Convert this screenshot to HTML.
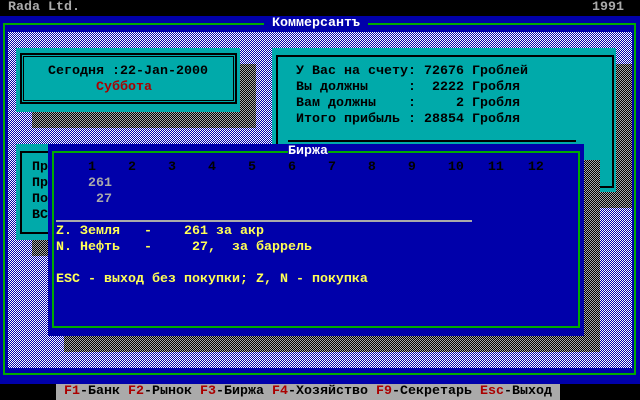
<!DOCTYPE html><html><head><meta charset="utf-8"><style>
*{margin:0;padding:0}
body{width:640px;height:400px;background:#000;position:relative;overflow:hidden;font-family:"Liberation Mono","DejaVu Sans Mono",monospace;font-size:13.33px;font-weight:bold;line-height:16px}
div{position:absolute}
.t{white-space:pre}
.chk{background:repeating-conic-gradient(#0000aa 0 25%,#ffffff 0 50%) 0 0/2px 2px}
.sh{background:repeating-conic-gradient(#000 0 25%,#aaaaaa 0 50%) 0 0/2px 2px}
.cy{background:#00aaaa}
.g{background:#00aa00}
</style></head><body>
<div class="t" style="left:8px;top:0;color:#aaa">Rada Ltd.</div>
<div class="t" style="left:592px;top:0;color:#aaa">1991</div>
<div style="left:0;top:16px;width:640px;height:368px;background:#0000aa"></div>
<div class="g" style="left:3px;top:23px;width:261px;height:2px"></div>
<div class="g" style="left:368px;top:23px;width:268px;height:2px"></div>
<div class="g" style="left:3px;top:23px;width:2px;height:352px"></div>
<div class="g" style="left:634px;top:23px;width:2px;height:352px"></div>
<div class="g" style="left:3px;top:373px;width:633px;height:2px"></div>
<div class="t" style="left:272px;top:16px;color:#fff">Коммерсантъ</div>
<div class="chk" style="left:8px;top:32px;width:624px;height:336px"></div>
<div class="sh" style="left:32px;top:64px;width:224px;height:64px"></div>
<div class="cy" style="left:16px;top:48px;width:224px;height:64px"></div>
<div style="left:20px;top:53px;width:213px;height:47px;border:2px solid #000"></div>
<div style="left:23px;top:56px;width:209px;height:43px;border:1px solid #000"></div>
<div class="t" style="left:48px;top:64px;color:#000">Сегодня :22-Jan-2000</div>
<div class="t" style="left:96px;top:80px;color:#aa0000">Суббота</div>
<div class="sh" style="left:288px;top:64px;width:344px;height:144px"></div>
<div class="cy" style="left:272px;top:48px;width:344px;height:144px"></div>
<div style="left:276px;top:55px;width:334px;height:129px;border:2px solid #000"></div>
<div class="t" style="left:296px;top:64px;color:#000">У Вас на счету: 72676 Гроблей
Вы должны     :  2222 Гробля
Вам должны    :     2 Гробля
Итого прибыль : 28854 Гробля</div>
<div style="left:288px;top:140px;width:288px;height:2px;background:#000"></div>
<div style="left:584px;top:160px;width:16px;height:32px;background:#000"></div>
<div style="left:584px;top:182px;width:16px;height:2px;background:#aaa"></div>
<div class="sh" style="left:32px;top:160px;width:40px;height:96px"></div>
<div class="cy" style="left:16px;top:144px;width:40px;height:96px"></div>
<div style="left:20px;top:151px;width:40px;height:79px;border:2px solid #000"></div>
<div class="t" style="left:32px;top:160px;color:#000">Пр
Пр
По
ВС</div>
<div class="sh" style="left:64px;top:160px;width:536px;height:192px"></div>
<div style="left:48px;top:144px;width:536px;height:192px;background:#0000aa"></div>
<div class="g" style="left:52px;top:151px;width:236px;height:2px"></div>
<div class="g" style="left:328px;top:151px;width:252px;height:2px"></div>
<div class="g" style="left:52px;top:151px;width:2px;height:177px"></div>
<div class="g" style="left:578px;top:151px;width:2px;height:177px"></div>
<div class="g" style="left:52px;top:326px;width:528px;height:2px"></div>
<div class="t" style="left:288px;top:144px;color:#fff">Биржа</div>
<div class="t" style="left:88px;top:160px;color:#000">1    2    3    4    5    6    7    8    9    10   11   12</div>
<div class="t" style="left:88px;top:176px;color:#aaa">261
 27</div>
<div style="left:56px;top:220px;width:416px;height:2px;background:#aaa"></div>
<div class="t" style="left:56px;top:224px;color:#ffff55">Z. Земля   -    261 за акр
N. Нефть   -     27,  за баррель

ESC - выход без покупки; Z, N - покупка</div>
<div style="left:56px;top:384px;width:504px;height:16px;background:#aaa"></div>
<div class="t" style="left:64px;top:384px;color:#000"><span style="color:#aa0000">F1</span>-Банк <span style="color:#aa0000">F2</span>-Рынок <span style="color:#aa0000">F3</span>-Биржа <span style="color:#aa0000">F4</span>-Хозяйство <span style="color:#aa0000">F9</span>-Секретарь <span style="color:#aa0000">Esc</span>-Выход</div>
</body></html>
